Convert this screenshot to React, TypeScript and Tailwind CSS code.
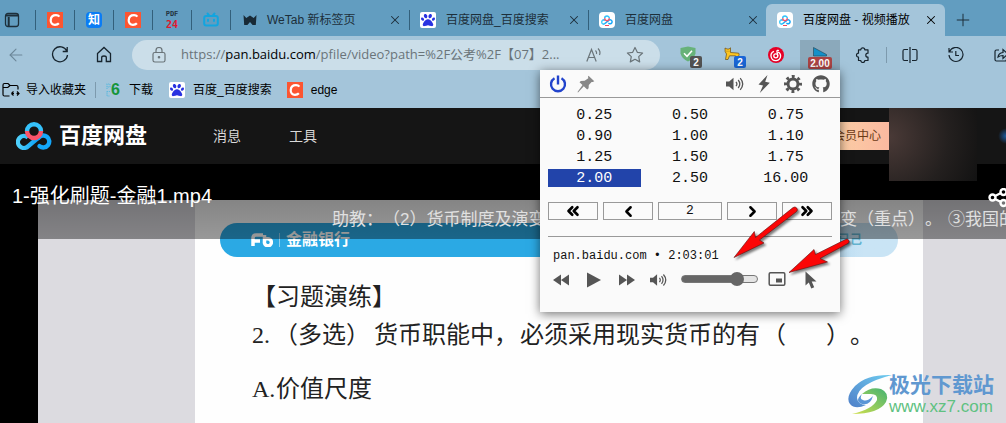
import React from "react";
import {
  LuArrowLeft,
  LuChevronLeft,
  LuChevronRight,
  LuChevronsLeft,
  LuChevronsRight,
  LuPlus,
  LuX,
} from "react-icons/lu";
import { FaGithub, FaPaw } from "react-icons/fa6";

const speeds = [
  "0.25", "0.50", "0.75",
  "0.90", "1.00", "1.10",
  "1.25", "1.50", "1.75",
  "2.00", "2.50", "16.00",
];

const CIcon = () => (
  <span className="flex size-4 shrink-0 items-center justify-center bg-[#fc5531]">
    <svg viewBox="0 0 16 16" className="size-4" fill="none" stroke="#fff" strokeWidth="2.2">
      <path d="M12.4 4.6C11.6 3.6 10.4 3.2 9 3.2C6 3.2 3.9 5.2 3.7 8.1C3.5 10.9 5.2 12.8 8 12.8C9.6 12.8 11 12.3 11.9 11.3" />
    </svg>
  </span>
);

const BaiduIcon = () => (
  <span className="flex size-4 shrink-0 items-center justify-center rounded-xs bg-white text-[#2932e1]">
    <FaPaw size={14} />
  </span>
);

const PanRings = ({ className }: { className: string }) => (
  <svg viewBox="0 0 36 28" className={className} fill="none" strokeWidth="4.4">
    <defs>
      <linearGradient id="ring" x1="0" x2="1">
        <stop offset="0" stopColor="#4fd0fb" />
        <stop offset="1" stopColor="#06a0f8" />
      </linearGradient>
    </defs>
    <path d="M11 9.2A7 7 0 0 1 25 9.2" stroke="#35c2fb" />
    <path d="M22.5 15.5L12.4 24A6 6 0 1 1 12 15.500" stroke="url(#ring)" />
    <path d="M22.5 15.8A6 6 0 1 1 23.6 24.200" stroke="#14a7fa" strokeLinecap="round" />
    <path d="M11 9A7 7 0 0 0 25 9" stroke="#f9546b" />
  </svg>
);

const PanIcon = () => (
  <span className="flex size-4 shrink-0 flex-col items-center justify-center rounded-sm bg-white">
    <PanRings className="h-2.5 w-3" />
    <span className="h-px w-1 bg-[#f04a5e]" />
  </span>
);

const Speaker = ({ className }: { className: string }) => (
  <svg viewBox="0 0 18 14" className={className} fill="#555" stroke="#555">
    <path d="M0 4.5H3.2L7.5 0.8V13.2L3.2 9.5H0Z" stroke="none" />
    <path d="M10 4.8Q11.8 7 10 9.2M12.2 3Q15.4 7 12.2 11M14.2 1.2Q19.2 7 14.2 12.8" fill="none" strokeWidth="1.3" />
  </svg>
);

const Gear = () => (
  <svg viewBox="0 0 18 18" className="size-[18px]" fill="none" stroke="#555">
    <circle cx="9" cy="9" r="5" strokeWidth="3" />
    <circle cx="9" cy="9" r="7.500" strokeWidth="3" strokeDasharray="2.900 2.990" strokeDashoffset="1.450" />
  </svg>
);

const Pinned = ({ label, children }: { label: string; children: React.ReactNode }) => (
  <div className="flex shrink-0 items-center">
    <span className="h-5 w-px bg-[#33607b]" />
    <button aria-label={label} className="flex w-[38px] items-center justify-center">
      {children}
    </button>
  </div>
);

type TabProps = {
  title: string;
  icon: React.ReactNode;
  active?: boolean;
};

const Tab = ({ title, icon, active }: TabProps) => (
  <div className={`flex w-[179px] shrink-0 items-center ${active ? "mt-1 rounded-t-md bg-[#a4c5da]" : ""}`}>
    <span className={`h-5 w-px ${active ? "" : "bg-[#33607b]"}`} />
    <button className="flex min-w-0 flex-1 items-center gap-2.5 pl-2.5 text-xs whitespace-nowrap">
      {icon}
      {title}
    </button>
    <button aria-label="关闭" className="mr-1.5 flex size-4 items-center justify-center">
      <LuX size={14} strokeWidth={1.8} />
    </button>
  </div>
);

const TabStrip = () => (
  <div className="flex h-9 bg-[#629dc0] text-[#1d2f3a]">
    <div className="flex flex-1 pt-1">
      <button aria-label="标签页操作" className="flex w-[35px] shrink-0 items-center pl-1">
        <svg viewBox="0 0 16 16" className="size-4" fill="none" stroke="currentColor" strokeWidth="1.3">
          <rect x="1.5" y="1.5" width="13" height="13" rx="2.5" />
          <path d="M2 3.5H14M4.7 5V14" strokeWidth="2" />
        </svg>
      </button>
      <Pinned label="CSDN"><CIcon /></Pinned>
      <Pinned label="知乎">
        <span className="flex size-4 items-center justify-center rounded-sm bg-[#0a7cf5] text-xs font-bold text-white">知</span>
      </Pinned>
      <Pinned label="CSDN"><CIcon /></Pinned>
      <Pinned label="PDF24">
        <span className="flex flex-col text-center font-['DejaVu_Sans_Mono'] font-bold">
          <span className="text-[7px] leading-[9px] text-[#22333e]">PDF</span>
          <span className="text-[10px] leading-3 text-[#e0182d]">24</span>
        </span>
      </Pinned>
      <Pinned label="哔哩哔哩">
        <svg viewBox="0 0 16 16" className="size-4" fill="none" stroke="#12a5df" strokeWidth="2" strokeLinecap="round">
          <rect x="1.2" y="4" width="13.6" height="9.6" rx="2" />
          <path d="M4.5 1.5L6.3 3.6M11.5 1.5L9.7 3.6M5 7.7V9M11 7.7V9" />
        </svg>
      </Pinned>
      <Tab
        title="WeTab 新标签页"
        icon={
          <svg viewBox="0 0 14 12" className="ml-0.5 h-3 w-3.5 shrink-0" fill="#182a36">
            <path d="M0.5 1L3.3 4L7 1.5L10.7 4L13.5 1L12.8 11H9.6L7 8L4.4 11H1.2Z" />
          </svg>
        }
      />
      <Tab title="百度网盘_百度搜索" icon={<BaiduIcon />} />
      <Tab title="百度网盘" icon={<PanIcon />} />
      <div className="-mt-1 -ml-px flex text-black">
        <Tab title="百度网盘 - 视频播放" icon={<PanIcon />} active />
      </div>
      <button aria-label="新建标签页" className="ml-2 flex w-5 shrink-0 items-center justify-center">
        <LuPlus size={20} strokeWidth={1.2} />
      </button>
    </div>
  </div>
);

const Arrows = () => (
  <svg viewBox="0 0 310 245" className="pointer-events-none absolute top-0 left-0 h-[245px] w-[310px] max-w-none drop-shadow-[2px_2px_1px_rgba(0,0,0,0.5)]">
    <g fill="#fb0606" stroke="#5a1111" strokeWidth="0.6">
      <path d="M194 187.500L214.300 161.500L215.500 167.500L253 137.600A2.500 2.500 0 0 1 256.300 141.800L219.500 170L224 173Z" />
      <path d="M249 202.500L274 179.500L275.500 184.500L305.500 169.500A2.300 2.300 0 0 1 308 173.400L280 188.500L287.500 192Z" />
    </g>
  </svg>
);

const stepButton = "flex h-[18px] w-[50px] items-center justify-center border border-[#999] text-black";

const SpeedPopup = () => (
  <div className="absolute top-full right-0 z-20 h-[242px] w-[300px] bg-[#fafafa] font-['Liberation_Mono',monospace] text-[#111] shadow-[0_2px_10px_rgba(0,0,0,0.55)]">
    <div className="flex h-7 items-center border-b border-[#999] pr-2.5 pl-[9px]">
      <button aria-label="开关">
        <svg viewBox="0 0 18 18" className="size-[18px]" fill="none" stroke="#2244cc" strokeWidth="2.4">
          <path d="M5.500 3.200A7 7 0 1 0 12.500 3.200M9 0.500V9.500" />
        </svg>
      </button>
      <button aria-label="固定" className="ml-2.5">
        <svg viewBox="0 0 18 18" className="size-[18px]" fill="#888">
          <path d="M11.500 0.800L17.300 6.200L15.700 7L14.600 6.900L11.800 9.900L11.600 13.300L10.200 14.500L6.800 11.300L1 17.500L0.500 17L5.500 10L2.500 7.200L3.800 6L7.600 5.700L11.300 3.200L11 1.800Z" />
        </svg>
      </button>
      <div className="ml-auto flex items-center">
        <button aria-label="音量" className="mr-3.5"><Speaker className="h-3.5 w-[18px]" /></button>
        <button aria-label="快捷" className="mr-3.5">
          <svg viewBox="0 0 12 18" className="h-[18px] w-3" fill="#555">
            <path d="M9.500 0L0.500 9.500L5 10.500L1.800 18L11.800 7.800L7.200 6.800Z" />
          </svg>
        </button>
        <button aria-label="设置" className="mr-2.5"><Gear /></button>
        <button aria-label="GitHub" className="text-[#555]"><FaGithub size={18} /></button>
      </div>
    </div>
    <div className="px-2 pt-2">
      <div className="grid grid-cols-3 gap-[3px] text-[15px] leading-4">
        {speeds.map((speed) => (
          <button key={speed} className={speed === "2.00" ? "h-[18px] bg-[#2244aa] pt-0.5 text-white" : "h-[18px] pt-0.5"}>
            {speed}
          </button>
        ))}
      </div>
      <div className="mt-[15px] flex justify-between">
        <button aria-label="减慢更多" className={stepButton}><LuChevronsLeft size={18} strokeWidth={3.5} /></button>
        <button aria-label="减慢" className={stepButton}><LuChevronLeft size={17} strokeWidth={3.5} /></button>
        <input aria-label="步长" defaultValue="2" className="h-[18px] w-16 border border-[#999] text-center text-[13px]" />
        <button aria-label="加快" className={stepButton}><LuChevronRight size={17} strokeWidth={3.5} /></button>
        <button aria-label="加快更多" className={stepButton}><LuChevronsRight size={18} strokeWidth={3.5} /></button>
      </div>
      <hr className="mt-4 border-[#999]" />
      <p className="mt-[11px] pl-[5px] text-xs leading-4">pan.baidu.com • 2:03:01</p>
      <div className="mt-[7px] flex h-[18px] items-center pl-1 text-[#555]">
        <button aria-label="后退" className="w-[34px]">
          <svg viewBox="0 0 18 12" className="h-3 w-[18px]" fill="currentColor">
            <path d="M9 0.500V11.500L1 6ZM17 0.500V11.500L9 6Z" />
          </svg>
        </button>
        <button aria-label="播放" className="w-8">
          <svg viewBox="0 0 16 16" className="size-4" fill="currentColor">
            <path d="M1 0.500L15 8L1 15.500Z" />
          </svg>
        </button>
        <button aria-label="快进" className="w-8">
          <svg viewBox="0 0 18 12" className="h-3 w-[18px]" fill="currentColor">
            <path d="M1 0.500V11.500L9 6ZM9 0.500V11.500L17 6Z" />
          </svg>
        </button>
        <button aria-label="静音" className="w-[31px]"><Speaker className="h-3.5 w-[17px]" /></button>
        <input
          type="range"
          aria-label="音量"
          defaultValue="79"
          className="mb-0.5 h-2 w-[77px] appearance-none rounded-full border border-[#777] bg-linear-to-r from-[#666] from-75% to-[#e4e4e4] to-75% [&::-webkit-slider-thumb]:size-3.5 [&::-webkit-slider-thumb]:appearance-none [&::-webkit-slider-thumb]:rounded-full [&::-webkit-slider-thumb]:bg-[#666]"
        />
        <button aria-label="画中画" className="mb-0.5 ml-2.5">
          <svg viewBox="0 0 18 14" className="h-3.5 w-[18px]" fill="none" stroke="currentColor" strokeWidth="1.500">
            <rect x="1.200" y="0.800" width="15.600" height="12.400" rx="1.200" />
            <rect x="8" y="6.500" width="6" height="4" fill="currentColor" stroke="none" />
          </svg>
        </button>
        <button aria-label="选择" className="ml-[19px]">
          <svg viewBox="0 0 12 18" className="h-[18px] w-3" fill="currentColor">
            <path d="M0.500 0.500V14.500L3.800 11.600L6.300 17.500L9.200 16.200L6.700 10.600H11.500Z" />
          </svg>
        </button>
      </div>
    </div>
    <Arrows />
  </div>
);

const toolButton = "relative flex h-[30px] w-11 shrink-0 items-center justify-center";

const Toolbar = () => (
  <div className="flex h-[38px] items-center text-[#16242e]">
    <button aria-label="后退" className="w-[38px] shrink-0 pl-1.5 text-[#6c8799]"><LuArrowLeft size={20} strokeWidth={1.3} /></button>
    <button aria-label="刷新" className={toolButton}>
      <svg viewBox="0 0 18 18" className="size-[18px]" fill="none" stroke="currentColor" strokeWidth="1.3">
        <path d="M15.800 5A7.500 7.500 0 1 0 16.500 9M16.200 1V5.500H11.700" />
      </svg>
    </button>
    <button aria-label="主页" className={toolButton}>
      <svg viewBox="0 0 16 18" className="h-[18px] w-4" fill="none" stroke="currentColor" strokeWidth="1.3">
        <path d="M1.500 7.500L8 1.500L14.500 7.500V15.500H10.300V11.500Q10.300 10 8 10Q5.700 10 5.700 11.500V15.500H1.500Z" />
      </svg>
    </button>
    <div className="ml-1.5 flex h-[30px] min-w-0 flex-1 items-center rounded-full bg-[#cbdee9] pr-4 pl-5 text-[#6a7479]">
      <svg viewBox="0 0 14 16" className="h-4 w-3.5 shrink-0" fill="none" stroke="currentColor" strokeWidth="1.200">
        <rect x="1" y="5.500" width="12" height="9.500" rx="1.800" />
        <path d="M4 5.500V3.500A3 3 0 0 1 10 3.500V5.500" />
        <circle cx="7" cy="10.300" r="0.700" fill="currentColor" />
      </svg>
      <div className="ml-[15px] min-w-0 flex-1 font-['Open_Sans','Noto_Sans_CJK_SC',sans-serif] text-[13px] whitespace-nowrap">
        https://<span className="text-black">pan.baidu.com</span>/pfile/video?path=%2F公考%2F【07】2...
      </div>
      <button aria-label="朗读" className="mr-6 ml-2">
        <svg viewBox="0 0 16 16" className="size-4" fill="none" stroke="currentColor" strokeWidth="1.200">
          <path d="M0.800 14.500L5.500 2.500L10.200 14.500M2.500 10.500H8.600M9.500 3.500Q11 5 10.500 7M12 1.500Q15 4.500 13.500 8" />
        </svg>
      </button>
      <button aria-label="收藏">
        <svg viewBox="0 0 18 18" className="size-[18px]" fill="none" stroke="currentColor" strokeWidth="1.200" strokeLinejoin="round">
          <path d="M9 1.500L11.300 6.300L16.600 7L12.700 10.600L13.700 15.900L9 13.300L4.300 15.900L5.300 10.600L1.400 7L6.700 6.300Z" />
        </svg>
      </button>
    </div>
    <div className="flex w-[346px] shrink-0 items-center pl-1.5">
      <button aria-label="广告拦截" className={toolButton}>
        <svg viewBox="0 0 16 16" className="mb-0.5 size-4" fill="#67b279">
          <path d="M8 0.500L15.500 2V7.500Q14 13 8 15.500Q2 13 0.500 7.500V2Z" />
          <path d="M4 7.300L7 10.300L12 4.800" fill="none" stroke="#fff" strokeWidth="1.500" />
        </svg>
        <span className="absolute right-2 bottom-0.5 flex h-3 w-3 items-center justify-center rounded-xs bg-[#535353] text-[10px] font-bold text-white">2</span>
      </button>
      <button aria-label="脚本" className={toolButton}>
        <svg viewBox="0 0 16 14" className="mb-0.5 h-3.5 w-4" fill="#fcc521" stroke="#6b4c12" strokeWidth="0.700">
          <path d="M1 1L3 2H5L6.500 0.800V5.500L13 6Q15.500 5.500 15.200 8L13 11H11.500V8.800H5.500L4 12.500H1.500L2.500 7Q0.500 5 1 1Z" />
          <path d="M3 3.800V4.600M5 3.800V4.600" />
        </svg>
        <span className="absolute right-2 bottom-0.5 flex h-3 w-3 items-center justify-center rounded-xs bg-[#1a66d6] text-[10px] font-bold text-white">2</span>
      </button>
      <button aria-label="音乐" className={toolButton}>
        <svg viewBox="0 0 16 16" className="size-4" fill="none" stroke="#fff" strokeWidth="1.300">
          <circle cx="8" cy="8" r="8" fill="#e60026" stroke="none" />
          <circle cx="7.800" cy="8.800" r="2" />
          <path d="M9.800 8.800L8.900 4.500Q9 2.800 11 3.500M10 5Q12.800 6.300 12.600 9A4.800 4.800 0 1 1 6 4.300" />
        </svg>
      </button>
      <div className="relative ml-0.5 shrink-0">
        <button aria-label="播放速度" className="flex h-[30px] w-10 flex-col items-center justify-end bg-[#8ba9bb]">
          <svg viewBox="0 0 14 10" className="h-2.5 w-3.5" fill="#1490c8" stroke="#24404f" strokeWidth="0.600">
            <path d="M0.500 0.500L13.500 7.500V9H0.500Z" />
          </svg>
          <span className="mb-px flex h-3 items-center rounded-xs bg-[#aa4444] px-0.5 text-[10px] font-bold text-white">2.00</span>
        </button>
        <SpeedPopup />
      </div>
      <button aria-label="扩展" className={toolButton}>
        <svg viewBox="0 0 16 16" className="size-4" fill="none" stroke="currentColor" strokeWidth="1.200" strokeLinejoin="round">
          <path d="M4.500 2.800H6.800A2 2 0 0 1 10.800 2.800H14V6.200Q11.800 6.200 11.800 8.200Q11.800 10.200 14 10.200V13.500H10.800A2 2 0 0 1 6.800 13.500H4.500V10.200A2 2 0 0 1 4.500 6.200Z" />
        </svg>
      </button>
      <span className="ml-0.5 h-4 w-px shrink-0 bg-[#7d9aad]" />
      <button aria-label="分屏" className={toolButton}>
        <svg viewBox="0 0 16 16" className="ml-0.5 size-4" fill="none" stroke="currentColor" strokeWidth="1.200">
          <path d="M6 2.500H2.500Q1 2.500 1 4V12Q1 13.500 2.500 13.500H6M10 2.500H13.500Q15 2.500 15 4V12Q15 13.500 13.500 13.500H10M8 0V16" />
        </svg>
      </button>
      <button aria-label="历史记录" className={toolButton}>
        <svg viewBox="0 0 16 16" className="ml-1.5 size-4" fill="none" stroke="currentColor" strokeWidth="1.200">
          <path d="M1 1V5H5M1.500 4.800A7 7 0 1 1 1 8M7.800 4V8.500H11" />
        </svg>
      </button>
      <button aria-label="共享" className={toolButton}>
        <svg viewBox="0 0 16 16" className="ml-2 size-4" fill="none" stroke="currentColor" strokeWidth="1.200">
          <path d="M6 3H3.500Q2 3 2 4.500V12.500Q2 14 3.500 14H12Q13.500 14 13.500 12.500V11M5 10Q5.500 6 10 5.500V2.500L15 7L10 11.500V8.500Q7 8.500 5 10Z" />
        </svg>
      </button>
    </div>
  </div>
);

const Bookmarks = () => (
  <nav className="flex h-[34px] items-center pb-0.5 pl-0.5 text-xs text-black">
    <button className="flex items-center gap-1.5">
      <svg viewBox="0 0 18 16" className="h-4 w-[18px]" fill="none" stroke="currentColor" strokeWidth="1.200">
        <path d="M7.500 14H2.500Q1 14 1 12.500V3Q1 1.500 2.500 1.500H6L8 3.500H14.500Q16 3.500 16 5V7.500M1 5.500H5.800L8 3.500M15 9.500L17 11.500L15 13.500M11.500 9.500L9.500 11.500M17 11.500H14.500M9.500 11.500L11.500 13.500M9.500 11.500H12" />
      </svg>
      导入收藏夹
    </button>
    <span className="ml-[9px] h-4 w-px bg-[#7d9aad]" />
    <a href="#" className="ml-2.5 flex items-center">
      <svg viewBox="0 0 5 14" className="h-3.5 w-[5px]" fill="none" stroke="#5fb9dd" strokeWidth="1.200" strokeDasharray="1.200 0.800">
        <path d="M1 6V1H4V4H1M4 8.500H1V13H4" />
      </svg>
      <span className="w-[18px] text-base font-bold text-[#15953a]">6</span>
      下载
    </a>
    <a href="#" className="ml-4 flex items-center gap-2"><BaiduIcon />百度_百度搜索</a>
    <a href="#" className="ml-[15px] flex items-center gap-2"><CIcon />edge</a>
  </nav>
);

const SiteHeader = () => (
  <header className="flex h-14 items-center bg-[#151515] pl-4 text-sm text-[#d8d8d8]">
    <PanRings className="h-7 w-9 shrink-0" />
    <span className="ml-[7px] w-[154px] shrink-0 text-[22px] font-bold text-white">百度网盘</span>
    <a href="#" className="w-[76px] shrink-0">消息</a>
    <a href="#" className="shrink-0">工具</a>
    <a href="#" className="ml-auto flex h-7 w-20 shrink-0 items-center justify-end rounded-l bg-linear-to-r from-[#fbd9a8] to-[#fbb9a0] pr-2 text-xs text-[#6b3a16]">
      会员中心
    </a>
    {/* blurred account card hangs a little below the bar */}
    <div className="z-10 h-[73px] w-[88px] shrink-0 self-start bg-[radial-gradient(circle_at_0_40%,#4a3a37,#24201f_60%,#121212)]" />
    <div className="h-6 w-[29px] shrink-0 bg-[radial-gradient(circle_at_100%_50%,#1c5a9e,#151515_25%)]" />
  </header>
);

const Watermark = () => (
  <div className="absolute right-3 bottom-1.5 flex items-center">
    <svg viewBox="0 0 46 42" className="h-[42px] w-[46px]">
      <defs>
        <linearGradient id="swooshBlue" x1="0" y1="1" x2="1" y2="0">
          <stop offset="0" stopColor="#4f7fc8" />
          <stop offset="1" stopColor="#6fcdf0" />
        </linearGradient>
        <linearGradient id="swooshGreen" x1="0" y1="1" x2="1" y2="0">
          <stop offset="0" stopColor="#d3e04c" />
          <stop offset="1" stopColor="#44b272" />
        </linearGradient>
      </defs>
      <path d="M45 1Q20 0 8 12Q-2 23 3 30Q8 36 19 31Q11 31 10 24Q10 10 45 1Z" fill="url(#swooshBlue)" />
      <path d="M15 20Q24 12 34 15Q43 19 39 28Q32 40 5 40Q26 35 30 26Q31 20 24 20Q18 20 15 20Z" fill="url(#swooshGreen)" />
      <path d="M15 20Q12 25 16 26Q20 28 26 22Q23 32 15 30Q7 27 15 20Z" fill="#5b96d6" />
    </svg>
    <div className="-ml-1 flex flex-col">
      <span className="text-[21px] leading-6 font-bold text-[#6098d0]">极光下载站</span>
      <span className="text-[17px] leading-5 text-[#5fc181]">www.xz7.com</span>
    </div>
  </div>
);

const Player = () => (
  <main className="relative flex-1 bg-black pt-9 pl-[38px]">
    <div className="flex h-full min-h-[223px] bg-[#dcdbe0] pr-[83px] pl-[157px]">
      <div className="min-w-0 flex-1 bg-[#fefefe] px-[25px] pt-[23px] whitespace-nowrap text-[#222]">
        <div className="flex h-[34px] items-center rounded-full bg-linear-to-r from-[#2ba9e4] from-50% to-[#c9e4f5] to-95% pr-9 pl-[31px] text-white">
          <svg viewBox="0 0 22 14" className="h-3.5 w-[22px]" fill="none" stroke="#fff" strokeWidth="3.500">
            <path d="M2 13V5Q2 2 5 2H12M2 8H9M13.500 2V8.500A3.500 3.500 0 1 0 17 5.800H14.500" />
          </svg>
          <span className="mx-1.5 h-3.5 w-px bg-[#8fd0f0]" />
          <span className="text-base font-bold">金融银行</span>
          <span className="ml-auto text-xs font-bold text-[#63b3cf]">已己</span>
        </div>
        <div className="pl-8 text-2xl leading-[38px]">
          <p className="mt-[21px]">【习题演练】</p>
          <div className="flex">
            <span className="w-[22px] font-['Liberation_Serif',serif]">2.</span>
            <span className="w-[100px]">（多选）</span>
            <span className="w-[146px]">货币职能中，</span>
            <span className="w-[242px]">必须采用现实货币的有</span>
            <span className="flex w-[88px] justify-between"><span>（</span><span>）</span></span>
            <span>。</span>
          </div>
          <div className="mt-4 flex">
            <span className="w-6 font-['Liberation_Serif',serif]">A.</span>
            <span>价值尺度</span>
          </div>
        </div>
      </div>
    </div>
    {/* dark overlay with the title and the scrolling comments */}
    <div className="absolute inset-x-0 top-0 h-[75px] overflow-hidden bg-linear-to-b from-black/55 to-black/40 text-white">
      <h1 className="absolute top-[18px] left-3 text-xl">1-强化刷题-金融1.mp4</h1>
      <p className="absolute top-11 left-[332px] text-[17px] leading-6 whitespace-nowrap text-[#e0e0e0]">助教：（2）货币制度及演变</p>
      <p className="absolute top-11 left-[840px] flex gap-1.5 text-[17px] leading-6 whitespace-nowrap text-[#e0e0e0]">
        <span>变（重点）。</span>
        <span>③我国的</span>
      </p>
      <button aria-label="分享" className="absolute top-6 -right-1">
        <svg viewBox="0 0 22 20" className="h-5 w-[22px]" fill="none" stroke="#fff" strokeWidth="2.400">
          <path d="M7 8L13 5M7 11L13 14" />
          <circle cx="4.500" cy="9.500" r="3" />
          <circle cx="15.500" cy="4" r="3" />
          <circle cx="15.500" cy="15" r="3" />
        </svg>
      </button>
    </div>
    <Watermark />
  </main>
);

const App = () => {
  return (
    <div className="flex min-h-screen flex-col overflow-hidden font-['Liberation_Sans','Noto_Sans_CJK_SC',sans-serif] [text-spacing-trim:space-all]">
      <TabStrip />
      <div className="bg-[#a4c5da]">
        <Toolbar />
        <Bookmarks />
      </div>
      <SiteHeader />
      <Player />
    </div>
  );
};

export default App;
